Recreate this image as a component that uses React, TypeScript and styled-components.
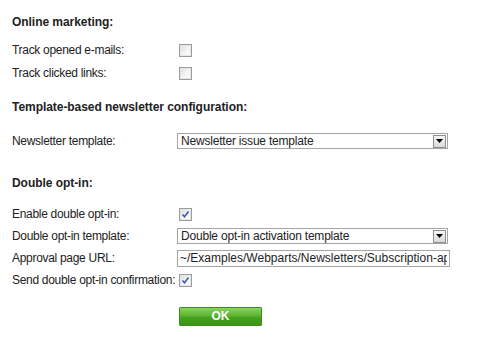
import React from "react";
import styled, {createGlobalStyle} from "styled-components";

const GlobalStyle = createGlobalStyle`
  html, body {
    margin: 0;
    padding: 0;
    background: #ffffff;
  }
  body {
    font-family: "Liberation Sans", Arial, sans-serif;
    font-size: 12px;
    color: #222222;
  }
`

const Page = styled.div`
  display: flex;
  flex-direction: column;
  padding: 14px 0 0 12px;
  width: 488px;
`
const Heading = styled.div<{ mt?: number; mb?: number }>`
  font-weight: bold;
  font-size: 12px;
  line-height: 16px;
  height: 16px;
  letter-spacing: -0.05px;
  margin-top: ${props => props.mt ?? 0}px;
  margin-bottom: ${props => props.mb ?? 0}px;
`
const Rows = styled.div<{ gap?: number }>`
  display: grid;
  grid-template-columns: 165px 1fr;
  grid-auto-rows: 22px;
  row-gap: ${props => props.gap ?? 0}px;
`
const Label = styled.div`
  display: flex;
  align-items: center;
  white-space: nowrap;
  line-height: 14px;
  letter-spacing: -0.3px;
`
const Cell = styled.div`
  display: flex;
  align-items: center;
`
const Box = styled.span`
  display: inline-flex;
  align-items: center;
  justify-content: center;
  box-sizing: border-box;
  width: 13px;
  height: 13px;
  margin-left: 2px;
  border: 1px solid #9c9c9c;
  background: linear-gradient(135deg, #dcdcdc 0%, #f4f4f4 55%, #ffffff 100%);
  box-shadow: inset 0 0 0 1px #e6e6e6;
`
const Select = styled.div<{ width: number }>`
  display: flex;
  align-items: center;
  box-sizing: border-box;
  width: ${props => props.width}px;
  height: 16px;
  border: 1px solid #a5a5a5;
  background: #ffffff;
`
const SelectText = styled.span`
  flex: 1;
  padding-left: 3px;
  line-height: 14px;
  letter-spacing: -0.2px;
  white-space: nowrap;
  overflow: hidden;
`
const Arrow = styled.span`
  display: flex;
  align-items: center;
  justify-content: center;
  box-sizing: border-box;
  width: 13px;
  height: 13px;
  margin-right: 1px;
  border: 1px solid #8f8f8f;
  background: linear-gradient(#f6f6f6, #dadada);
`
const TextInput = styled.input`
  box-sizing: border-box;
  width: 273px;
  height: 17px;
  margin: 0;
  padding: 0 2px;
  border: 1px solid #a5a5a5;
  outline: none;
  font-family: "Liberation Sans", Arial, sans-serif;
  font-size: 12px;
  color: #222222;
  background: #ffffff;
`
const Actions = styled.div`
  display: flex;
  padding-left: 167px;
  margin-top: 16px;
`
const OkButton = styled.button`
  box-sizing: border-box;
  width: 83px;
  height: 19px;
  padding: 0;
  border: 1px solid #3d8f1c;
  border-radius: 1px;
  background: linear-gradient(#8ad35e 0%, #5cb532 45%, #46a21f 55%, #3d9419 100%);
  color: #ffffff;
  font-family: "Liberation Sans", Arial, sans-serif;
  font-weight: bold;
  font-size: 12px;
  line-height: 17px;
  cursor: pointer;
`

const Checkbox = ({checked}: { checked?: boolean }) => (
    <Box>
        {checked && (
            <svg width="9" height="9" viewBox="0 0 9 9">
                <path d="M1.5 4.5 L3.5 6.8 L7.5 1.5" fill="none" stroke="#3a5fb0" strokeWidth="1.6"/>
            </svg>
        )}
    </Box>
)

const Dropdown = ({value, width}: { value: string; width: number }) => (
    <Select width={width}>
        <SelectText>{value}</SelectText>
        <Arrow>
            <svg width="7" height="4" viewBox="0 0 7 4">
                <path d="M0 0 L7 0 L3.5 4 Z" fill="#000000"/>
            </svg>
        </Arrow>
    </Select>
)

const App = () => {
    return (
        <>
            <GlobalStyle/>
            <Page>
                <Heading mb={9}>Online marketing:</Heading>
                <Rows gap={1}>
                    <Label>Track opened e-mails:</Label>
                    <Cell><Checkbox/></Cell>
                    <Label>Track clicked links:</Label>
                    <Cell><Checkbox/></Cell>
                </Rows>
                <Heading mt={15} mb={15}>Template-based newsletter configuration:</Heading>
                <Rows>
                    <Label>Newsletter template:</Label>
                    <Cell><Dropdown value="Newsletter issue template" width={271}/></Cell>
                </Rows>
                <Heading mt={23} mb={12}>Double opt-in:</Heading>
                <Rows>
                    <Label>Enable double opt-in:</Label>
                    <Cell><Checkbox checked/></Cell>
                    <Label>Double opt-in template:</Label>
                    <Cell><Dropdown value="Double opt-in activation template" width={271}/></Cell>
                    <Label>Approval page URL:</Label>
                    <Cell>
                        <TextInput readOnly value="~/Examples/Webparts/Newsletters/Subscription-approval.aspx"/>
                    </Cell>
                    <Label>Send double opt-in confirmation:</Label>
                    <Cell><Checkbox checked/></Cell>
                </Rows>
                <Actions>
                    <OkButton>OK</OkButton>
                </Actions>
            </Page>
        </>
    )
}

export default App;
